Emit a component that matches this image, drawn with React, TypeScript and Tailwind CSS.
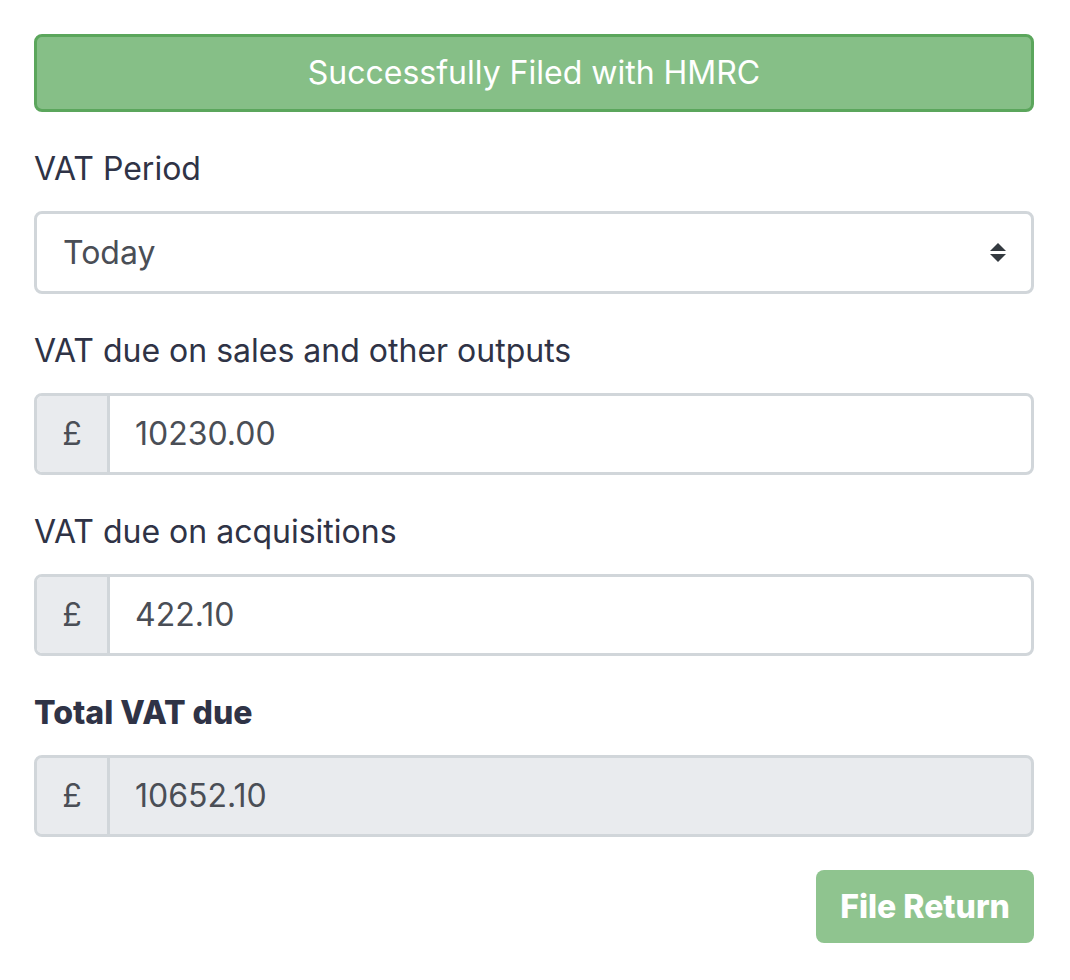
import React from 'react';

const labelCls = 'mt-[33px] mb-[18px] text-[32px] leading-[48px] text-[#2f3346]';

function MoneyInput({ value, disabled }: { value: string; disabled?: boolean }) {
  return (
    <div
      className={`flex h-[82px] overflow-hidden rounded-[8px] border-[3px] border-[#d1d6da] ${
        disabled ? 'bg-[#e9ebee]' : 'bg-white'
      }`}
    >
      <div className="flex w-[73px] items-center justify-center border-r-[3px] border-[#d1d6da] bg-[#e9ebee] text-[32px] text-[#4a4e56]">
        £
      </div>
      <div className="flex flex-1 items-center pl-[25px] text-[32px] text-[#4a4e56]">{value}</div>
    </div>
  );
}

export default function App() {
  return (
    <div className="min-h-screen bg-white px-[34px] pt-[34px] font-['Inter',sans-serif]">
      <div className="w-[1000px]">
        {/* Status banner */}
        <div className="flex h-[78px] items-center justify-center rounded-[8px] border-[3px] border-[#5ba65c] bg-[#86bf87] text-[32px] text-white">
          Successfully Filed with HMRC
        </div>

        <div className={labelCls}>VAT Period</div>
        <div className="flex h-[83px] items-center justify-between rounded-[8px] border-[3px] border-[#d1d6da] bg-white pl-[26px] pr-[25px] text-[32px] text-[#4a4e56]">
          <span>Today</span>
          <svg width="16" height="20" viewBox="0 0 16 20" className="text-[#343a40]">
            <path d="M8 0 L16 8 H0 Z" fill="currentColor" />
            <path d="M0 11 H16 L8 19 Z" fill="currentColor" />
          </svg>
        </div>

        <div className={labelCls}>VAT due on sales and other outputs</div>
        <MoneyInput value="10230.00" />

        <div className={labelCls}>VAT due on acquisitions</div>
        <MoneyInput value="422.10" />

        <div className={`${labelCls} font-extrabold`}>Total VAT due</div>
        <MoneyInput value="10652.10" disabled />

        <div className="mt-[33px] flex justify-end">
          <button className="h-[73px] w-[218px] rounded-[8px] bg-[#8fc48f] text-[32px] font-extrabold text-white">
            File Return
          </button>
        </div>
      </div>
    </div>
  );
}
